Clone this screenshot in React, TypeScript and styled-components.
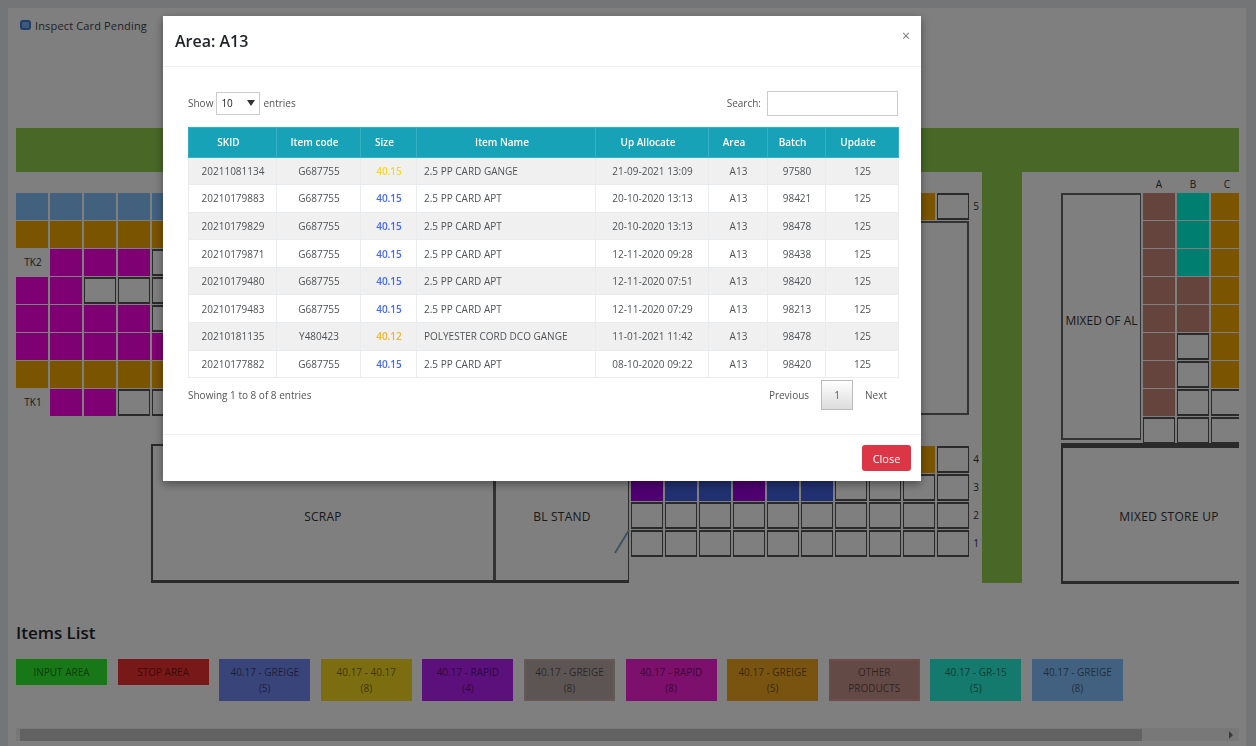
import React from "react";
import styled, { createGlobalStyle } from "styled-components";

const GlobalStyle = createGlobalStyle`
  * { box-sizing: border-box; }
  body {
    margin: 0;
    background: #e6eaef;
    color: #212529;
    font-family: "Open Sans", "Liberation Sans", sans-serif;
    overflow: hidden;
  }
`;

const Page = styled.main`
  width: 1256px;
  height: 746px;
  padding: 8px 10px 0 8px;
`;

const Card = styled.section`
  height: 738px;
  padding: 0 0 0 8px;
  background: #fff;
  display: flex;
  flex-direction: column;
  overflow: hidden;
`;

const TopBar = styled.header`
  height: 120px;
  flex: none;
  padding: 9px 4px 0;
`;

const TopLink = styled.a`
  display: flex;
  align-items: center;
  gap: 4px;
  height: 16px;
  font-size: 11px;
  letter-spacing: 0.15px;
  color: #3d454e;
`;

const Mark = styled.span`
  width: 11px;
  height: 10px;
  border: 2px solid #3f7fd0;
  border-radius: 3px;
  background: #7db3f2;
`;

const Road = styled.div`
  width: 1223px;
  height: 44px;
  flex: none;
  background: #92d050;
`;

const Plan = styled.div`
  display: flex;
  width: 1223px;
  height: 411px;
  flex: none;
`;

const LeftBlock = styled.div`
  width: 615px;
  flex: none;
  padding-top: 21px;
  display: flex;
  flex-direction: column;
  justify-content: space-between;
`;

const MiddleBlock = styled.div`
  width: 351px;
  flex: none;
  padding-top: 21px;
`;

const SideRoad = styled.div`
  width: 40px;
  flex: none;
  background: #92d050;
`;

const RightBlock = styled.div`
  width: 178px;
  margin-left: 39px;
  flex: none;
  padding-top: 3px;
`;

const Row = styled.div`
  display: flex;
  height: 28px;
`;

const Slot = styled.div<{ $fill?: string }>`
  width: 32px;
  height: 27px;
  margin: 0 2px 1px 0;
  flex: none;
  border: solid ${(p) => p.$fill ?? "#555"};
  border-width: 2px 1px;
  background: ${(p) => p.$fill ?? "#fff"};
`;

const SlotLabel = styled.div<{ $narrow?: boolean }>`
  width: ${(p) => (p.$narrow ? 10 : 34)}px;
  flex: none;
  font-size: 10px;
  line-height: ${(p) => (p.$narrow ? 27 : 26)}px;
  text-align: center;
  color: #333;
`;

const Rooms = styled.div`
  display: flex;
  width: 478px;
  height: 139px;
  margin-left: 135px;
  border: solid #555;
  border-width: 2px 1px 3px 2px;
`;

const Room = styled.div<{ $width: number }>`
  position: relative;
  width: ${(p) => p.$width}px;
  flex: none;
  padding-top: 7px;
  display: flex;
  align-items: center;
  justify-content: center;
  font-size: 12px;
  letter-spacing: 0.2px;
  color: #333;
  & + & { border-left: 3px solid #666; }
`;

const Ramp = styled.svg`
  position: absolute;
  right: -2px;
  bottom: 26px;
`;

const Hall = styled.div`
  width: 338px;
  height: 194px;
  border: 2px solid #666;
`;

const Spacer = styled.div`
  height: 31px;
`;

const ColumnHeads = styled.div`
  display: flex;
  height: 18px;
  padding-left: 81px;
`;

const ColumnHead = styled.div`
  width: 34px;
  flex: none;
  font-size: 10px;
  line-height: 18px;
  text-align: center;
  color: #333;
`;

const Bay = styled.div`
  display: flex;
  height: 250px;
  overflow: hidden;
`;

const Store = styled.div`
  width: 80px;
  height: 247px;
  margin-right: 2px;
  flex: none;
  display: flex;
  align-items: center;
  justify-content: center;
  padding-top: 8px;
  border: 2px solid #666;
  border-right-width: 1px;
  font-size: 12px;
  white-space: nowrap;
  color: #333;
`;

const SlotColumn = styled.div`
  width: 34px;
  flex: none;
`;

const Yard = styled.div`
  height: 141px;
  display: flex;
  align-items: center;
  justify-content: center;
  padding: 4px 0 0 36px;
  border: solid #555;
  border-width: 5px 0 3px 2px;
  font-size: 12px;
  letter-spacing: 0.3px;
  color: #333;
`;

const ListTitle = styled.h2`
  flex: none;
  height: 76px;
  margin: 0;
  padding-top: 39px;
  font-size: 17px;
  line-height: 21px;
  font-weight: 600;
`;

const Legend = styled.div`
  display: flex;
  align-items: flex-start;
  gap: 10.6px;
  height: 69px;
  flex: none;
`;

const LegendItem = styled.div<{ $fill: string; $edge?: string }>`
  width: 91px;
  padding: 3px 4px;
  border: 2px solid ${(p) => p.$edge ?? p.$fill};
  background: ${(p) => p.$fill};
  text-align: center;
  font-size: 10px;
  line-height: 16px;
  white-space: pre-line;
  color: rgba(0, 0, 0, 0.55);
`;

const ScrollTrack = styled.div`
  display: flex;
  justify-content: space-between;
  align-items: center;
  width: 1223px;
  height: 13px;
  flex: none;
  padding: 0 4px;
  background: #f1f1f1;
`;

const ScrollThumb = styled.div`
  width: 1122px;
  height: 12px;
  background: #c4c4c4;
`;

const Backdrop = styled.div`
  position: fixed;
  inset: 0;
  background: rgba(0, 0, 0, 0.5);
`;

const Modal = styled.div`
  width: 758px;
  height: 465px;
  margin: 16px 0 0 163px;
  background: #fff;
  box-shadow: 0 3px 9px rgba(0, 0, 0, 0.4);
`;

const ModalHeader = styled.header`
  display: flex;
  justify-content: space-between;
  height: 51px;
  padding: 13px 11px 0 12px;
  border-bottom: 1px solid #efefef;
`;

const ModalTitle = styled.h1`
  margin: 0;
  font-size: 16px;
  line-height: 24px;
  font-weight: 600;
`;

const Dismiss = styled.button`
  padding: 0;
  border: 0;
  height: 14px;
  background: none;
  color: #777;
  font-family: inherit;
  font-size: 14px;
  line-height: 14px;
`;

const ModalBody = styled.div`
  height: 368px;
  padding: 23px 23px 0 25px;
  font-size: 10px;
  color: #555;
  border-bottom: 1px solid #efefef;
`;

const Controls = styled.div`
  display: flex;
  justify-content: space-between;
  height: 37px;
`;

const ControlLabel = styled.label`
  display: flex;
  align-items: center;
  height: 26px;
  gap: 3px;
`;

const LengthBox = styled.span`
  display: flex;
  align-items: center;
  justify-content: space-between;
  width: 44px;
  height: 23px;
  padding: 0 4px;
  border: 1px solid #ccc;
  color: #222;
`;

const SearchInput = styled.input`
  width: 131px;
  height: 25px;
  margin-left: 3px;
  border: 1px solid #ccc;
  background: #fff;
`;

const Table = styled.table`
  width: 710px;
  table-layout: fixed;
  border-collapse: collapse;
  font-size: 10px;
`;

const Th = styled.th`
  height: 29.5px;
  padding: 0 8px 0 0;
  background: #17a2b8;
  color: #fff;
  font-weight: 600;
  border: 1px solid #38b0c3;
  white-space: nowrap;
`;

const Tr = styled.tr`
  &:nth-child(odd) { background: #f0f0f0; }
`;

const Td = styled.td<{ $color?: string; $left?: boolean }>`
  height: 27.6px;
  padding: ${(p) => (p.$left ? "0 0 0 7px" : "0 0 0 1px")};
  border: 1px solid #e9ecef;
  text-align: ${(p) => (p.$left ? "left" : "center")};
  color: ${(p) => p.$color ?? "#4f5357"};
  font-weight: ${(p) => (p.$color ? 600 : 400)};
  white-space: nowrap;
`;

const TableFooter = styled.div`
  display: flex;
  justify-content: space-between;
  padding-top: 2px;
`;

const Info = styled.div`
  padding-top: 8px;
  font-size: 10px;
`;

const Pager = styled.div`
  display: flex;
  align-items: center;
  gap: 12px;
  padding-right: 11px;
`;

const PageNumber = styled.span`
  width: 32px;
  height: 30px;
  line-height: 28px;
  text-align: center;
  border: 1px solid #bbb;
  background: linear-gradient(#fff, #dcdcdc);
`;

const ModalFooter = styled.footer`
  display: flex;
  justify-content: flex-end;
  padding: 10px 10px 0;
`;

const CloseButton = styled.button`
  width: 49px;
  height: 26px;
  border: 0;
  border-radius: 3px;
  background: #dc3545;
  color: #fff;
  font-family: inherit;
  font-size: 11px;
`;

const SKY = "#84c2ff";
const ORANGE = "#f6a800";
const PINK = "#ff00e6";
const BROWN = "#cc887c";
const TEAL = "#00ffe0";
const VIOLET = "#9c00e0";
const BLUE = "#4360e0";

type Fill = string | undefined;
const slots = (n: number, fill?: string): Fill[] => Array.from({ length: n }, () => fill);

const leftRows: { label?: string; cells: Fill[] }[] = [
  { cells: slots(18, SKY) },
  { cells: slots(18, ORANGE) },
  { label: "TK2", cells: [...slots(3, PINK), ...slots(14)] },
  { cells: [...slots(2, PINK), ...slots(16)] },
  { cells: [...slots(4, PINK), ...slots(14)] },
  { cells: [...slots(6, PINK), ...slots(12)] },
  { cells: slots(18, ORANGE) },
  { label: "TK1", cells: [...slots(2, PINK), ...slots(15)] },
];

const lowerRows: { label: string; cells: Fill[] }[] = [
  { label: "4", cells: [...slots(9, ORANGE), undefined] },
  { label: "3", cells: [VIOLET, BLUE, BLUE, VIOLET, BLUE, BLUE, ...slots(4)] },
  { label: "2", cells: slots(10) },
  { label: "1", cells: slots(10) },
];

const bayColumns: Fill[][] = [
  [...slots(8, BROWN), ...slots(1)],
  [...slots(3, TEAL), ...slots(2, BROWN), ...slots(4)],
  [...slots(7, ORANGE), ...slots(2)],
];

const legend = [
  { text: "INPUT AREA", fill: "#30f030" },
  { text: "STOP AREA", fill: "#f03030" },
  { text: "40.17 - GREIGE\n(5)", fill: "#7088f4" },
  { text: "40.17 - 40.17\n(8)", fill: "#f8dc20" },
  { text: "40.17 - RAPID\n(4)", fill: "#b820f8" },
  { text: "40.17 - GREIGE\n(8)", fill: "#b8aaa8", edge: "#cbb0ae" },
  { text: "40.17 - RAPID\n(8)", fill: "#f820d8" },
  { text: "40.17 - GREIGE\n(5)", fill: "#f0a820" },
  { text: "OTHER\nPRODUCTS", fill: "#c8948c", edge: "#d89890" },
  { text: "40.17 - GR-15\n(5)", fill: "#28f4dc" },
  { text: "40.17 - GREIGE\n(8)", fill: "#84c0ff" },
];

const headings = ["SKID", "Item code", "Size", "Item Name", "Up Allocate", "Area", "Batch", "Update"];
const widths = [88, 84, 56, 179, 113, 59, 58, 73];
const LINK = "#4468ff";

const records = [
  ["20211081134", "G687755", "40.15", "2.5 PP CARD GANGE", "21-09-2021 13:09", "A13", "97580", "125"],
  ["20210179883", "G687755", "40.15", "2.5 PP CARD APT", "20-10-2020 13:13", "A13", "98421", "125"],
  ["20210179829", "G687755", "40.15", "2.5 PP CARD APT", "20-10-2020 13:13", "A13", "98478", "125"],
  ["20210179871", "G687755", "40.15", "2.5 PP CARD APT", "12-11-2020 09:28", "A13", "98438", "125"],
  ["20210179480", "G687755", "40.15", "2.5 PP CARD APT", "12-11-2020 07:51", "A13", "98420", "125"],
  ["20210179483", "G687755", "40.15", "2.5 PP CARD APT", "12-11-2020 07:29", "A13", "98213", "125"],
  ["20210181135", "Y480423", "40.12", "POLYESTER CORD DCO GANGE", "11-01-2021 11:42", "A13", "98478", "125"],
  ["20210177882", "G687755", "40.15", "2.5 PP CARD APT", "08-10-2020 09:22", "A13", "98420", "125"],
];

const sizeColor = (i: number) => (i === 0 ? "#f5d820" : i === 6 ? "#f0b32c" : LINK);

export default function App() {
  return (
    <>
      <GlobalStyle />
      <Page>
        <Card>
          <TopBar>
            <TopLink><Mark />Inspect Card Pending</TopLink>
          </TopBar>
          <Road />
          <Plan>
            <LeftBlock>
              <div>
                {leftRows.map((row, r) => (
                  <Row key={r}>
                    {row.label && <SlotLabel>{row.label}</SlotLabel>}
                    {row.cells.map((fill, i) => <Slot key={i} $fill={fill} />)}
                  </Row>
                ))}
              </div>
              <Rooms>
                <Room $width={340}>SCRAP</Room>
                <Room $width={135}>
                  BL STAND
                  <Ramp width="17" height="26" viewBox="0 0 17 26">
                    <path d="M2 25L16 2" stroke="#7fa8c0" strokeWidth="2" fill="none" />
                  </Ramp>
                </Room>
              </Rooms>
            </LeftBlock>
            <MiddleBlock>
              <Row>
                {slots(9, ORANGE).map((fill, i) => <Slot key={i} $fill={fill} />)}
                <Slot />
                <SlotLabel $narrow>5</SlotLabel>
              </Row>
              <Hall />
              <Spacer />
              {lowerRows.map((row) => (
                <Row key={row.label}>
                  {row.cells.map((fill, i) => <Slot key={i} $fill={fill} />)}
                  <SlotLabel $narrow>{row.label}</SlotLabel>
                </Row>
              ))}
            </MiddleBlock>
            <SideRoad />
            <RightBlock>
              <ColumnHeads>
                {["A", "B", "C"].map((name) => <ColumnHead key={name}>{name}</ColumnHead>)}
              </ColumnHeads>
              <Bay>
                <Store>MIXED OF AL</Store>
                {bayColumns.map((column, c) => (
                  <SlotColumn key={c}>
                    {column.map((fill, i) => <Slot key={i} $fill={fill} />)}
                  </SlotColumn>
                ))}
              </Bay>
              <Yard>MIXED STORE UP</Yard>
            </RightBlock>
          </Plan>
          <ListTitle>Items List</ListTitle>
          <Legend>
            {legend.map((item, i) => (
              <LegendItem key={i} $fill={item.fill} $edge={item.edge}>{item.text}</LegendItem>
            ))}
          </Legend>
          <ScrollTrack>
            <ScrollThumb />
            <svg width="8" height="8" viewBox="0 0 8 8"><path d="M2 0l4 4-4 4z" fill="#777" /></svg>
          </ScrollTrack>
        </Card>
      </Page>
      <Backdrop>
        <Modal role="dialog">
          <ModalHeader>
            <ModalTitle>Area: A13</ModalTitle>
            <Dismiss aria-label="Dismiss">×</Dismiss>
          </ModalHeader>
          <ModalBody>
            <Controls>
              <ControlLabel>
                Show
                <LengthBox>
                  10
                  <svg width="8" height="6" viewBox="0 0 8 6"><path d="M0 0h8L4 6z" fill="#333" /></svg>
                </LengthBox>
                entries
              </ControlLabel>
              <ControlLabel>Search:<SearchInput /></ControlLabel>
            </Controls>
            <Table>
              <colgroup>{widths.map((w, i) => <col key={i} width={w} />)}</colgroup>
              <thead>
                <tr>{headings.map((h) => <Th key={h}>{h}</Th>)}</tr>
              </thead>
              <tbody>
                {records.map((record, r) => (
                  <Tr key={r}>
                    {record.map((value, c) => (
                      <Td key={c} $left={c === 3} $color={c === 2 ? sizeColor(r) : undefined}>{value}</Td>
                    ))}
                  </Tr>
                ))}
              </tbody>
            </Table>
            <TableFooter>
              <Info>Showing 1 to 8 of 8 entries</Info>
              <Pager>
                <span>Previous</span>
                <PageNumber>1</PageNumber>
                <span>Next</span>
              </Pager>
            </TableFooter>
          </ModalBody>
          <ModalFooter><CloseButton>Close</CloseButton></ModalFooter>
        </Modal>
      </Backdrop>
    </>
  );
}
